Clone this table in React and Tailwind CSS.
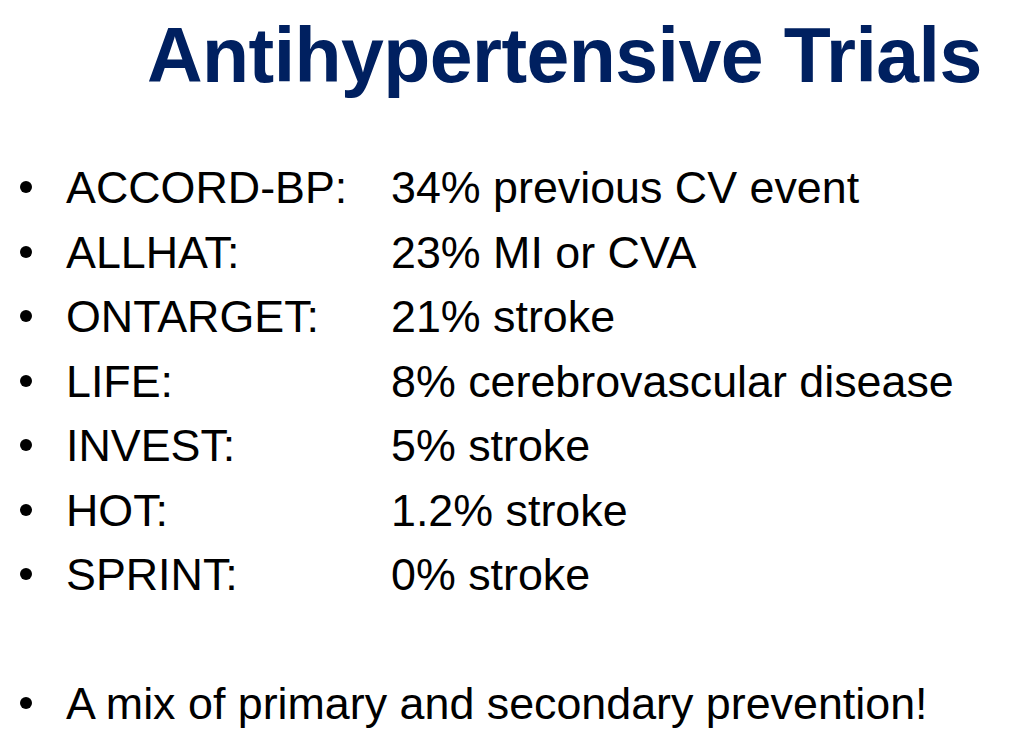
import React from "react";

const trials = [
  { name: "ACCORD-BP:", value: "34% previous CV event" },
  { name: "ALLHAT:", value: "23% MI or CVA" },
  { name: "ONTARGET:", value: "21% stroke" },
  { name: "LIFE:", value: "8% cerebrovascular disease" },
  { name: "INVEST:", value: "5% stroke" },
  { name: "HOT:", value: "1.2% stroke" },
  { name: "SPRINT:", value: "0% stroke" },
];

function Bullet() {
  return (
    <span className="w-[66px] shrink-0 flex items-center">
      <span className="ml-[20px] w-[12px] h-[12px] rounded-full bg-black" />
    </span>
  );
}

export default function App() {
  return (
    <div
      className="w-[1023px] h-[750px] bg-white overflow-hidden text-black"
      style={{ fontFamily: '"Liberation Sans", Arial, sans-serif' }}
    >
      {/* title */}
      <h1 className="pl-[147px] pt-[18px] text-[77px] leading-[75px] font-bold tracking-[-0.55px] text-[#002060] whitespace-nowrap">
        Antihypertensive Trials
      </h1>

      {/* list */}
      <ul className="mt-[62px] text-[44.8px] leading-[64.5px]">
        {trials.map((t) => (
          <li key={t.name} className="flex items-center">
            <Bullet />
            <span className="w-[325px] shrink-0">{t.name}</span>
            <span className="whitespace-nowrap">{t.value}</span>
          </li>
        ))}
        <li className="flex items-center mt-[64.5px]">
          <Bullet />
          <span className="whitespace-nowrap">A mix of primary and secondary prevention!</span>
        </li>
      </ul>
    </div>
  );
}
